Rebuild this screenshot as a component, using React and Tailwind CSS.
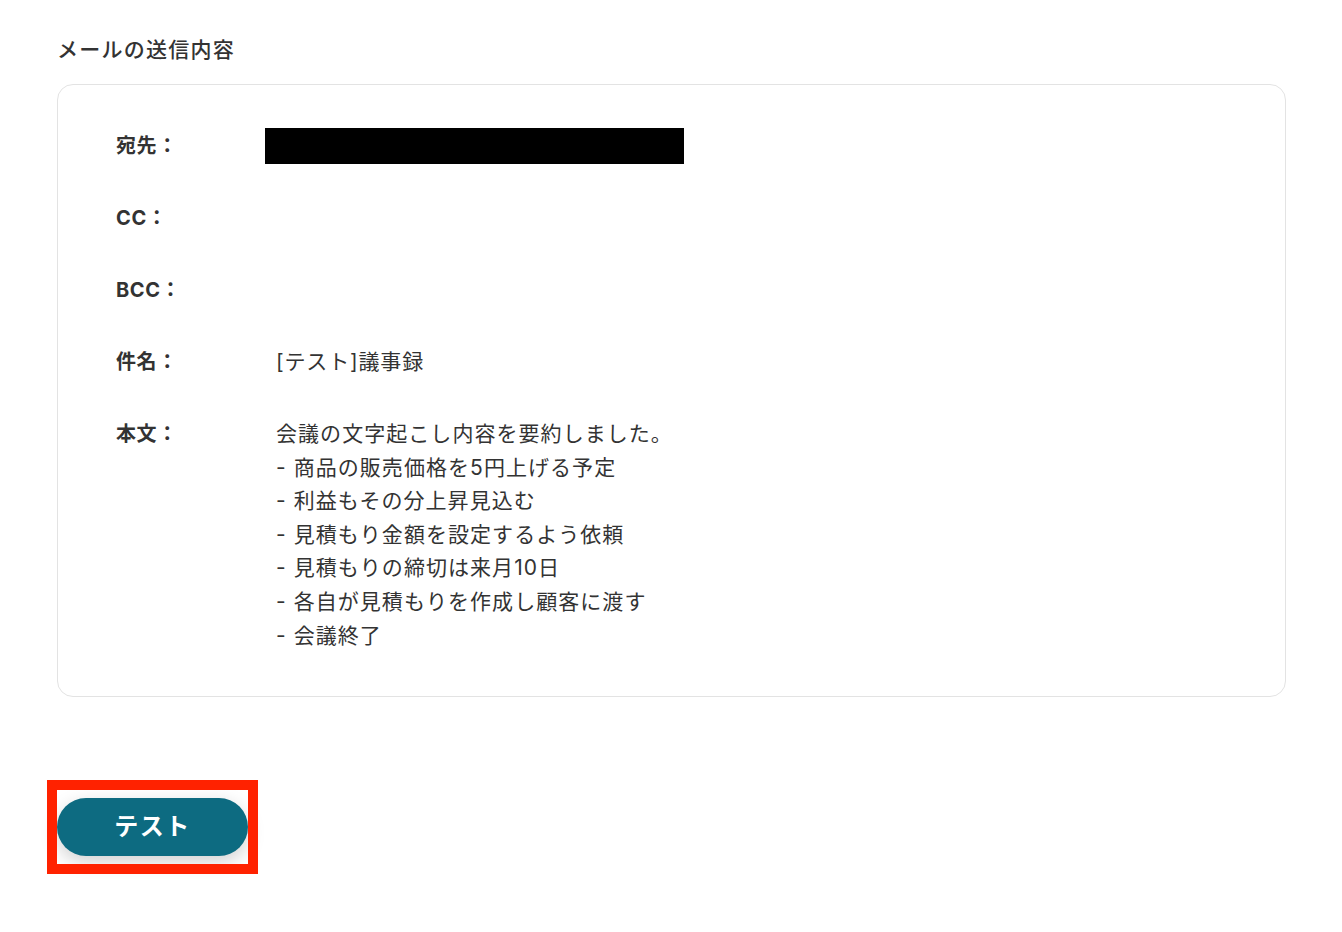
const font = { fontFamily: '"Inter", "Noto Sans CJK JP", sans-serif' };

const bodyLines = [
  "会議の文字起こし内容を要約しました。",
  "- 商品の販売価格を5円上げる予定",
  "- 利益もその分上昇見込む",
  "- 見積もり金額を設定するよう依頼",
  "- 見積もりの締切は来月10日",
  "- 各自が見積もりを作成し顧客に渡す",
  "- 会議終了",
];

function Row({ label, children }) {
  return (
    <div className="flex items-start">
      <div className="w-[149px] shrink-0 text-[20px] font-bold leading-[36px] tracking-[0.03em] text-[#333]">
        {label}
      </div>
      <div className="min-h-[36px] flex-1">{children}</div>
    </div>
  );
}

export default function App() {
  return (
    <div className="min-h-[932px] bg-white text-[#333]" style={font}>
      <div className="px-[57px] pt-[35px]">
        <h2 className="text-[21px] font-medium leading-[30px] tracking-[0.06em] text-[#333]">
          メールの送信内容
        </h2>

        <div className="mt-[19px] w-[1229px] rounded-[16px] border border-[#e3e3e3] pb-[44px] pl-[58px] pt-[43px]">
          <div className="flex flex-col gap-[36px]">
            <Row label="宛先：">
              <div className="h-[36px] w-[419px] bg-black" />
            </Row>
            <Row label="CC：" />
            <Row label="BCC：" />
            <Row label="件名：">
              <p className="pl-[11px] text-[21px] leading-[36px] tracking-[0.04em]">[テスト]議事録</p>
            </Row>
            <div className="flex items-start">
              <div className="w-[149px] shrink-0 pt-[1px] text-[20px] font-bold leading-[34px] tracking-[0.03em]">
                本文：
              </div>
              <div className="pl-[11px] pt-[1px] text-[21px] leading-[33.6px] tracking-[0.05em]">
                {bodyLines.map((line) => (
                  <p key={line}>{line}</p>
                ))}
              </div>
            </div>
          </div>
        </div>

        <div className="mt-[101px] inline-block">
          <div className="relative">
            <div className="pointer-events-none absolute -inset-x-[10px] -bottom-[18px] -top-[18px] border-[10px] border-[#ff2200]" />
            <button className="h-[58px] w-[191px] rounded-full bg-[#0d6b81] text-[24px] font-bold tracking-[0.06em] text-white shadow-[0_6px_18px_rgba(0,0,0,0.18)]">
              テスト
            </button>
          </div>
        </div>
      </div>
    </div>
  );
}
